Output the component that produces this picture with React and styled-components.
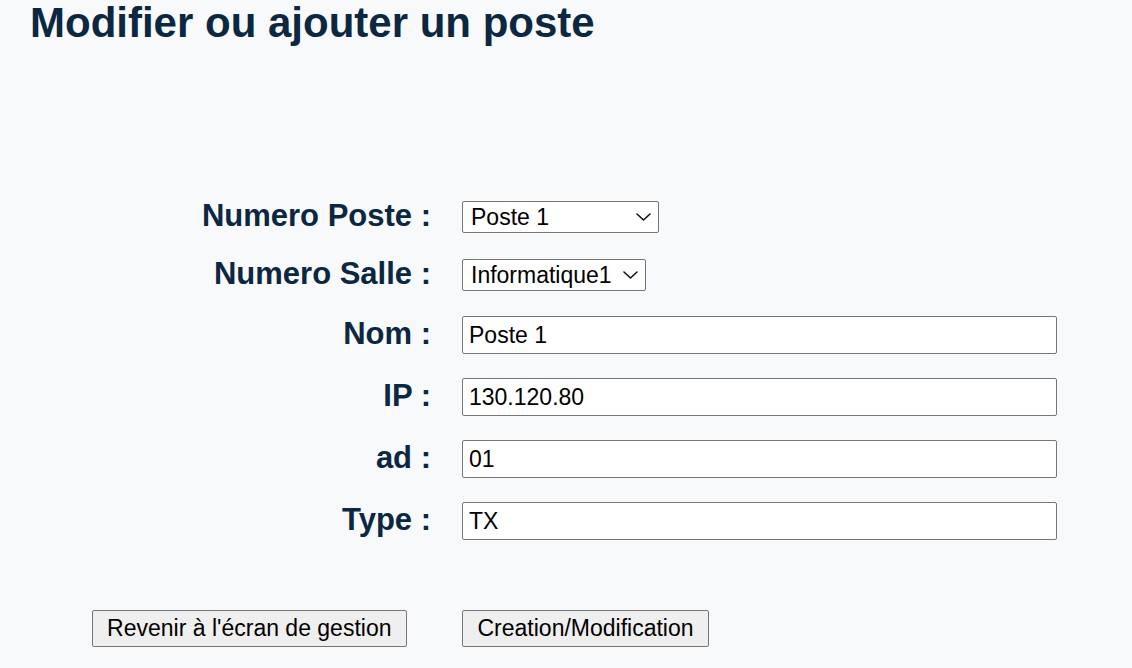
import React from 'react';
import styled, { createGlobalStyle } from 'styled-components';

const GlobalStyle = createGlobalStyle`
  html, body {
    margin: 0;
    padding: 0;
    background: #f8f9fb;
  }
  body {
    font-family: "Liberation Sans", Arial, sans-serif;
  }
`;

const fields = [
    { label: 'Nom', value: 'Poste 1' },
    { label: 'IP', value: '130.120.80' },
    { label: 'ad', value: '01' },
    { label: 'Type', value: 'TX' },
];

const Chevron = () => (
    <ChevronIcon width="15" height="8" viewBox="0 0 15 8" fill="none">
        <path d="M1 1l6.5 6 6.5-6" stroke="#111" strokeWidth="1.6" strokeLinecap="round" strokeLinejoin="round" />
    </ChevronIcon>
);

const App = () => {
    return (
        <Page>
            <GlobalStyle />
            <Title>Modifier ou ajouter un poste</Title>
            <Form onSubmit={(e) => e.preventDefault()}>
                <Label>Numero Poste :</Label>
                <SelectWrap width={197}>
                    <Select defaultValue="Poste 1">
                        <option>Poste 1</option>
                        <option>Poste 2</option>
                        <option>Poste 3</option>
                    </Select>
                    <Chevron />
                </SelectWrap>

                <Label>Numero Salle :</Label>
                <SelectWrap width={184}>
                    <Select defaultValue="Informatique1">
                        <option>Informatique1</option>
                        <option>Informatique2</option>
                    </Select>
                    <Chevron />
                </SelectWrap>

                {fields.map((field) => (
                    <React.Fragment key={field.label}>
                        <Label>{field.label} :</Label>
                        <TextInput type="text" defaultValue={field.value} />
                    </React.Fragment>
                ))}

                <Button type="button" back>Revenir à l'écran de gestion</Button>
                <Button type="submit">Creation/Modification</Button>
            </Form>
        </Page>
    );
}

// START: Styled Components
const Page = styled.div({
    paddingBottom: '20px',
    color: '#0c2741',
});

const Title = styled.h1({
    margin: 0,
    paddingLeft: '30px',
    fontSize: '42px',
    lineHeight: '46px',
    fontWeight: 700,
    color: '#0c2741',
});

const Form = styled.form({
    display: 'grid',
    gridTemplateColumns: '403px 595px',
    columnGap: '31px',
    rowGap: '24px',
    alignItems: 'center',
    marginTop: '154px',
    paddingLeft: '28px',
});

const Label = styled.label({
    textAlign: 'right',
    fontSize: '31px',
    lineHeight: '32px',
    fontWeight: 700,
    color: '#0c2741',
    paddingBottom: '2px',
});

const SelectWrap = styled.div({
    position: 'relative',
    justifySelf: 'start',
    width: props => `${props.width}px`,
    height: '32px',
});

const Select = styled.select({
    appearance: 'none',
    width: '100%',
    height: '100%',
    boxSizing: 'border-box',
    fontFamily: '"Liberation Sans", Arial, sans-serif',
    fontSize: '23px',
    color: '#000',
    background: '#fff',
    border: '1px solid #767676',
    borderRadius: '2px',
    padding: '0 28px 0 8px',
    outline: 'none',
});

// Overlay chevron drawn over the select's right edge
const ChevronIcon = styled.svg({
    position: 'absolute',
    right: '8px',
    top: '12px',
    pointerEvents: 'none',
});

const TextInput = styled.input({
    width: '595px',
    height: '38px',
    boxSizing: 'border-box',
    fontFamily: '"Liberation Sans", Arial, sans-serif',
    fontSize: '23px',
    color: '#000',
    background: '#fff',
    border: '1px solid #767676',
    borderRadius: '2px',
    padding: '0 6px',
    outline: 'none',
});

const Button = styled.button({
    justifySelf: props => props.back ? 'end' : 'start',
    marginRight: props => props.back ? '24px' : 0,
    marginTop: '46px',
    height: '37px',
    boxSizing: 'border-box',
    padding: '0 14.5px',
    fontFamily: '"Liberation Sans", Arial, sans-serif',
    fontSize: '23px',
    color: '#000',
    background: '#efefef',
    border: '1px solid #767676',
    borderRadius: '2px',
    cursor: 'pointer',
});
// END: Styled Components

export default App;
